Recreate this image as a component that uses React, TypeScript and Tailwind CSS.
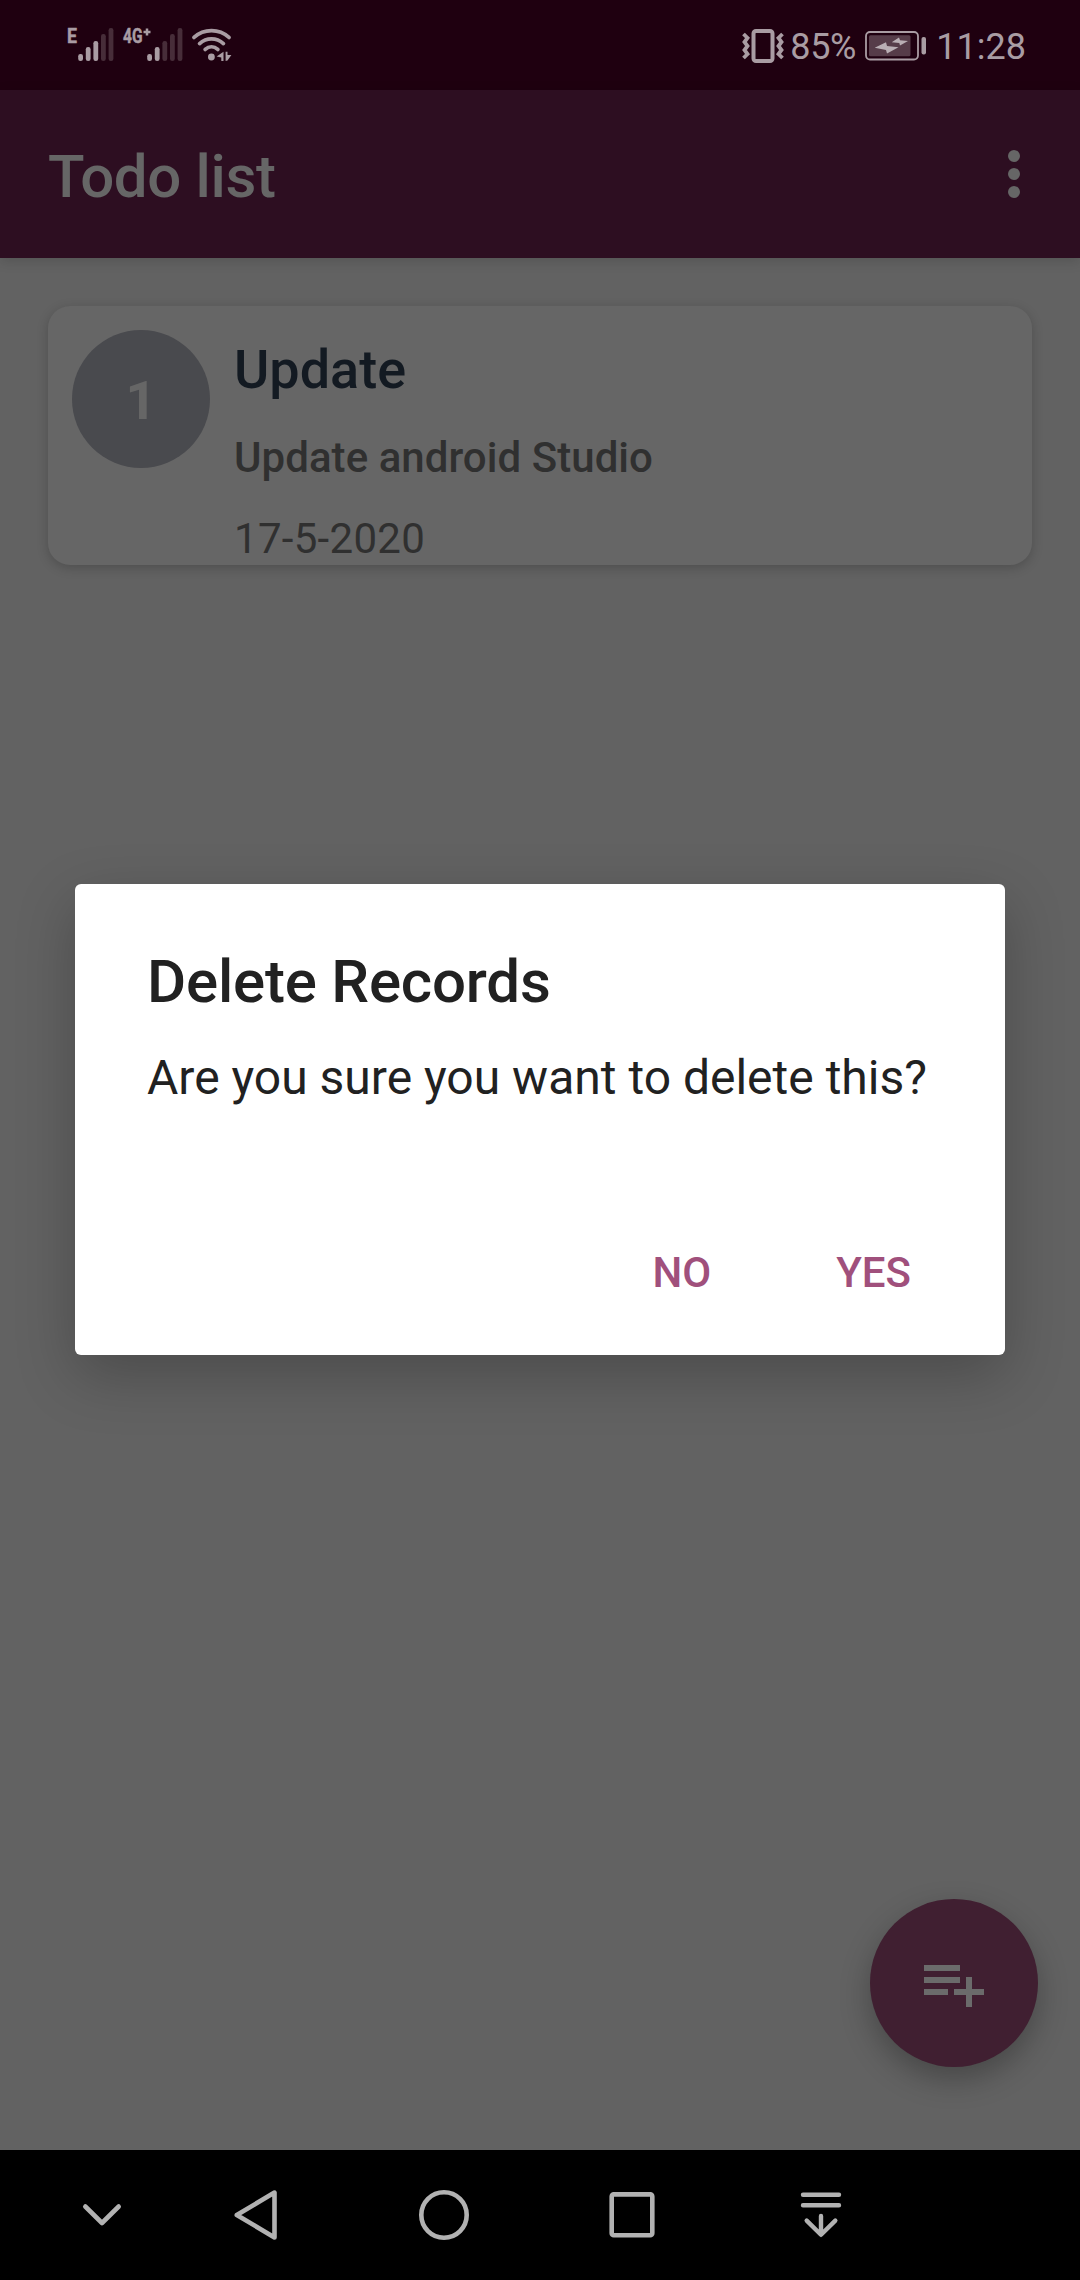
import React from "react";

const LIT = "#a99ca3";
const DIM = "#472d39";

function SignalBars({ lit }: { lit: number }) {
  const tops = [26, 19, 13, 6, 0];
  return (
    <svg width="36" height="33" viewBox="0 0 36 33" className="block">
      {tops.map((top, i) => (
        <rect key={i} x={0.2 + i * 7.6} y={top} width="4.8" height={33 - top} rx="2.2" fill={i < lit ? LIT : DIM} />
      ))}
    </svg>
  );
}

function WifiIcon() {
  return (
    <svg width="42" height="33" viewBox="0 0 42 33" className="block" fill="none" stroke={LIT} strokeWidth="3.8" strokeLinecap="round">
      <path d="M3 9.4C13 .4 28 .4 38 9.4" />
      <path d="M8.6 15.6C15.5 9.4 25.5 9.4 32.4 15.6" />
      <path d="M14.2 21.4C18 18 23 18 26.8 21.4" />
      <circle cx="20.4" cy="29" r="3.4" fill={LIT} stroke="none" />
      <path d="M25.6 28.600L32.500 23.800V33H30.300V29.500zM34.600 23.800H36.500V27H40.400L36.500 32.600L34.600 33z" fill={LIT} stroke="none" />
    </svg>
  );
}

function VibrateIcon() {
  return (
    <svg width="44" height="34" viewBox="0 0 44 34" className="block" fill="none" stroke={LIT}>
      <rect x="11.500" y="2" width="19" height="30" rx="2.500" strokeWidth="4" />
      <path d="M1.500 5l4 4-3 4 3 4-3 4 3 4-4 4M40.500 5l-4 4 3 4-3 4 3 4-3 4 4 4" strokeWidth="3.800" />
    </svg>
  );
}

function BatteryIcon() {
  return (
    <svg width="62" height="30" viewBox="0 0 62 30" className="block">
      <rect x="1" y="1" width="52" height="27.500" rx="4" fill="none" stroke={LIT} strokeWidth="1.800" />
      <rect x="4" y="4.200" width="41.500" height="21" rx="1.500" fill="#563c49" />
      <path d="M9.700 16.700L21 11.300L22 15L33.500 16.300L22 22.500L21 19zM26.700 11.300L34 6.500L35 9.300L43 10L35 14.500L34.300 12z" fill="#b9aeb4" />
      <rect x="56.500" y="6" width="4.500" height="17.500" rx="2" fill={LIT} />
    </svg>
  );
}

function StatusBar() {
  return (
    <header className="flex h-[90px] items-start justify-between bg-[#1f0010] pl-[67px] pr-[54px] text-[#a99ca3]">
      <div className="flex pt-[28px]">
        <svg width="11" height="16" viewBox="0 0 11 16" className="block overflow-visible">
          <text x="0" y="15" fontFamily="Roboto" fontWeight="700" fontSize="21" textLength="10" lengthAdjust="spacingAndGlyphs" fill={LIT} stroke={LIT} strokeWidth="0.5">E</text>
        </svg>
        <SignalBars lit={3} />
        <svg width="29" height="16" viewBox="0 0 29 16" className="ml-[9px] block overflow-visible">
          <text x="0" y="15" fontFamily="Roboto" fontWeight="700" fontSize="21" textLength="19.500" lengthAdjust="spacingAndGlyphs" fill={LIT} stroke={LIT} strokeWidth="0.5">4G</text>
          <path d="M20.500 4h7M24 .5v7" stroke={LIT} strokeWidth="2.500" />
        </svg>
        <div className="-ml-[5px]">
          <SignalBars lit={2} />
        </div>
        <div className="ml-[8px]">
          <WifiIcon />
        </div>
      </div>
      <div className="flex">
        <div className="pt-[29px]">
          <VibrateIcon />
        </div>
        <span className="ml-[4px] mt-[25px] w-[67px] whitespace-nowrap text-[36px] leading-[44px] tracking-[-0.4px]">85%</span>
        <div className="ml-[8px] mt-[31px]">
          <BatteryIcon />
        </div>
        <span className="ml-[9px] mt-[25px] whitespace-nowrap text-[36px] leading-[44px]">11:28</span>
      </div>
    </header>
  );
}

function AppBar() {
  return (
    <div className="relative flex h-[168px] items-center justify-between bg-[#2d0e21] pl-[48px] pr-[60px] shadow-[0_3px_12px_rgba(0,0,0,0.15)]">
      <h1 className="mt-[6px] text-[60px] font-medium leading-[70px] tracking-[-0.35px] text-[#666666]">Todo list</h1>
      <div className="flex flex-col gap-[6px]">
        <span className="size-3 rounded-full bg-[#666666]" />
        <span className="size-3 rounded-full bg-[#666666]" />
        <span className="size-3 rounded-full bg-[#666666]" />
      </div>
    </div>
  );
}

function TodoCard() {
  return (
    <article className="flex h-[259px] overflow-hidden rounded-[22px] bg-[#666666] pl-6 shadow-[0_3px_12px_rgba(0,0,0,0.2)]">
      <div className="mt-6 flex size-[138px] items-center justify-center rounded-full bg-[#494a4e] text-[54px] font-bold text-[#666666]">
        <span className="mt-[2px]">1</span>
      </div>
      <div className="ml-6 pt-[32px] text-[42px] leading-[50px] text-[#303030]">
        <h2 className="text-[54px] font-medium leading-[64px] text-[#131a22]">Update</h2>
        <p className="mt-[31px] font-medium tracking-[0.05px]">Update android Studio</p>
        <p className="mt-[31px] tracking-[0.3px]">17-5-2020</p>
      </div>
    </article>
  );
}

function DeleteDialog() {
  return (
    <div className="absolute left-[75px] top-[884px] h-[471px] w-[930px] rounded-[6px] bg-white pl-[72px] pt-[63px] text-[#212121] shadow-[0_20px_60px_rgba(0,0,0,0.24)]">
      <h2 className="text-[60px] font-medium leading-[70px] tracking-[-0.2px]">Delete Records</h2>
      <p className="mt-[33px] whitespace-nowrap text-[48px] leading-[56px]">Are you sure you want to delete this?</p>
      <div className="mt-[142px] flex justify-end gap-[125px] pr-[94px] text-[42px] font-medium leading-[50px] text-[#a0507c]">
        <button>NO</button>
        <button>YES</button>
      </div>
    </div>
  );
}

function AddButton() {
  return (
    <button className="absolute left-[870px] top-[1899px] flex size-[168px] items-center justify-center rounded-full bg-[#401f31] shadow-[0_12px_30px_rgba(0,0,0,0.28)]">
      <svg width="72" height="72" viewBox="0 0 24 24" fill="#6b6b6b">
        <path d="M14 10H2v2h12zM14 6H2v2h12zM18 14v-4h-2v4h-4v2h4v4h2v-4h4v-2zM2 16h8v-2H2z" />
      </svg>
    </button>
  );
}

function NavBar() {
  const common = {
    width: 56,
    height: 56,
    viewBox: "0 0 56 56",
    fill: "none",
    stroke: "#b2b2b2",
    strokeWidth: 4.6,
    strokeLinecap: "round" as const,
    strokeLinejoin: "round" as const,
  };
  return (
    <nav className="flex h-[130px] items-center bg-black pl-[74px]">
      <svg {...common}>
        <path d="M11.3 19.500L28 36 44.700 19.500" />
      </svg>
      <svg {...common} className="ml-[98px]">
        <path d="M8.800 28L46.500 5.600V50.400Z" />
      </svg>
      <svg {...common} className="ml-[132px]">
        <circle cx="28" cy="28" r="22.700" />
      </svg>
      <svg {...common} className="ml-[132px]">
        <rect x="7.700" y="7.400" width="40.600" height="40.800" rx="2" />
      </svg>
      <svg {...common} className="ml-[133px]">
        <path d="M10 7.700H46M10 18.300H46M28 29V47M13.700 33.600L28 47.800 42.300 33.600" strokeWidth="4.400" />
      </svg>
    </nav>
  );
}

export default function App() {
  return (
    <div className="relative flex h-[2280px] w-[1080px] flex-col overflow-hidden bg-[#626262] font-['Roboto',sans-serif]">
      <StatusBar />
      <AppBar />
      <main className="flex-1 px-12 pt-12">
        <TodoCard />
      </main>
      <NavBar />
      <AddButton />
      <DeleteDialog />
    </div>
  );
}
